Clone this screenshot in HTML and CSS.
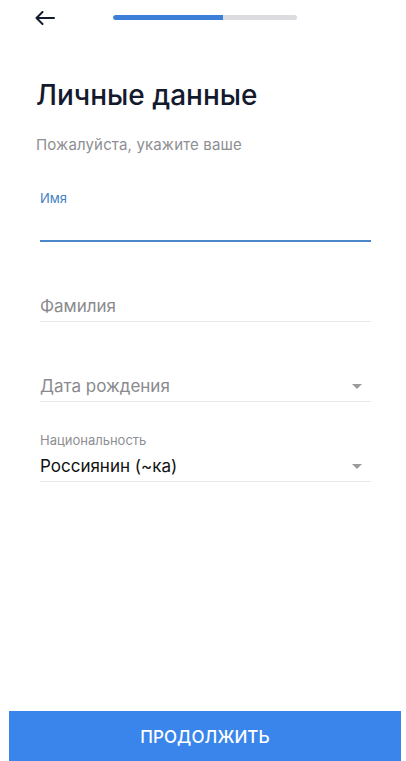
FILE: index.html
```html
<!DOCTYPE html>
<html lang="ru">
<head>
<meta charset="utf-8">
<title>Личные данные</title>
<link rel="stylesheet" href="styles.css">
</head>
<body>
<div class="screen">
  <header class="topbar">
    <button class="back" aria-label="Назад">
      <svg width="20" height="14" viewBox="0 0 20 14"><path d="M19 7H1.5M7.5 1L1.5 7l6 6" fill="none" stroke="#141a2e" stroke-width="2" stroke-linecap="round" stroke-linejoin="round"/></svg>
    </button>
    <div class="progress"><div class="progress-fill" style="width:60%"></div></div>
  </header>

  <main class="content">
    <h1 class="title">Личные данные</h1>
    <p class="subtitle">Пожалуйста, укажите ваше</p>

    <div class="fields">
      <div class="field field-focused">
        <div class="label label-active">Имя</div>
        <div class="row"></div>
      </div>
      <div class="field">
        <div class="label"></div>
        <div class="row"><span class="placeholder">Фамилия</span></div>
      </div>
      <div class="field">
        <div class="label"></div>
        <div class="row"><span class="placeholder">Дата рождения</span><span class="caret"></span></div>
      </div>
      <div class="field">
        <div class="label">Национальность</div>
        <div class="row"><span class="value">Россиянин (~ка)</span><span class="caret"></span></div>
      </div>
    </div>
  </main>

  <footer class="footer">
    <button class="continue">ПРОДОЛЖИТЬ</button>
  </footer>
</div>
</body>
</html>
```

FILE: styles.css
```css
* { box-sizing: border-box; }
html, body { margin: 0; padding: 0; background: #fff; }
body { font-family: Inter, "Noto Sans", sans-serif; }

.screen {
  width: 406px;
  height: 761px;
  display: flex;
  flex-direction: column;
  overflow: hidden;
}

.topbar {
  height: 35px;
  display: flex;
  align-items: center;
  flex-shrink: 0;
}
.back {
  margin-left: 35px;
  padding: 0;
  border: 0;
  background: none;
  width: 21px;
  height: 14px;
  display: flex;
}
.progress {
  margin-left: 57px;
  width: 184px;
  height: 5px;
  border-radius: 3px;
  background: #dcdce0;
  overflow: hidden;
}
.progress-fill {
  height: 100%;
  background: #3b7fd9;
  border-radius: 3px 0 0 3px;
}

.content {
  flex: 1;
  padding: 0 35px 0 36px;
}
.title {
  margin: 43px 0 0;
  font-size: 28px;
  line-height: 35px;
  font-weight: 500;
  color: #141a2e;
  letter-spacing: 0;
}
.subtitle {
  margin: 23px 0 0;
  font-size: 15px;
  line-height: 18px;
  color: #8e8e93;
  letter-spacing: 0.15px;
}

.fields {
  margin: 36px 0 0 4px;
  display: flex;
  flex-direction: column;
  gap: 30px;
}
.field {
  border-bottom: 1px solid #e8e8ea;
}
.field-focused {
  border-bottom: 2px solid #4a86c8;
}
.label {
  height: 16px;
  font-size: 13px;
  line-height: 16px;
  color: #8e8e93;
}
.label-active { color: #3f7fc6; }
.row {
  margin-top: 7px;
  height: 22px;
  margin-bottom: 4px;
  display: flex;
  align-items: center;
  justify-content: space-between;
  font-size: 17px;
  line-height: 22px;
}
.field-focused .row { margin-bottom: 5px; }
.placeholder { color: #8a8a8e; }
.value { color: #111; }
.caret {
  width: 0;
  height: 0;
  border-left: 5px solid transparent;
  border-right: 5px solid transparent;
  border-top: 5px solid #9b9b9f;
  margin-right: 9px;
}

.footer {
  flex-shrink: 0;
  padding: 0 5px 0 9px;
}
.continue {
  width: 100%;
  height: 50px;
  border: 0;
  background: #3a85ec;
  color: #fff;
  font-family: Inter, "Noto Sans", sans-serif;
  font-size: 17px;
  font-weight: 500;
  letter-spacing: 0.1px;
  padding-top: 3px;
}
```
